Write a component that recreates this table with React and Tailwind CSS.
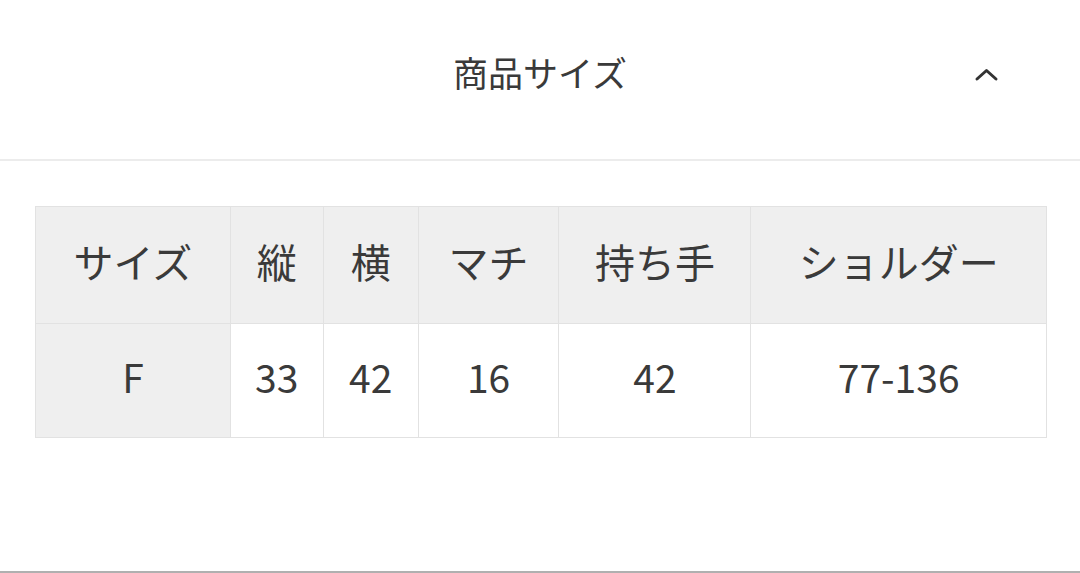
export default function App() {
  const cols = [
    { w: 'w-[194px]', h: 'サイズ', v: 'F' },
    { w: 'w-[93px]', h: '縦', v: '33' },
    { w: 'w-[95px]', h: '横', v: '42' },
    { w: 'w-[141px]', h: 'マチ', v: '16' },
    { w: 'w-[192px]', h: '持ち手', v: '42' },
    { w: 'w-[296px]', h: 'ショルダー', v: '77-136' },
  ];
  return (
    <div className="w-[1080px] h-[573px] bg-white flex flex-col text-[#333] font-['Noto_Sans_CJK_JP','Noto_Sans',sans-serif]">
      <div className="h-[161px] border-b-2 border-[#ececec] relative flex items-start justify-center pt-[48px]">
        <span className="text-[35px] leading-[48px] text-[#3a3a3a]">商品サイズ</span>
        <svg className="absolute left-[972px] top-[64px]" width="30" height="22" viewBox="0 0 30 22" fill="none">
          <path d="M5 15 L14.5 6.5 L24 15" stroke="#333" strokeWidth="3" strokeLinecap="round" strokeLinejoin="round" />
        </svg>
      </div>
      <div className="flex-1 pl-[35px] pt-[45px]">
        <div className="flex border border-[#e2e2e2] w-[1012px]">
          {cols.map((c, i) => (
            <div key={i} className={`${c.w} flex flex-col ${i > 0 ? 'border-l border-[#e2e2e2]' : ''}`}>
              <div className="h-[116px] bg-[#efefef] flex items-center justify-center pb-[8px] text-[40px] leading-[48px] text-[#3a3a3a]">{c.h}</div>
              <div className={`h-[114px] border-t border-[#e2e2e2] flex items-center justify-center pb-[10px] text-[39px] leading-[48px] text-[#3a3a3a] ${i === 0 ? 'bg-[#efefef]' : 'bg-white'}`}>{c.v}</div>
            </div>
          ))}
        </div>
      </div>
      <div className="h-[2px] bg-[#b0b0b0]"></div>
    </div>
  );
}
